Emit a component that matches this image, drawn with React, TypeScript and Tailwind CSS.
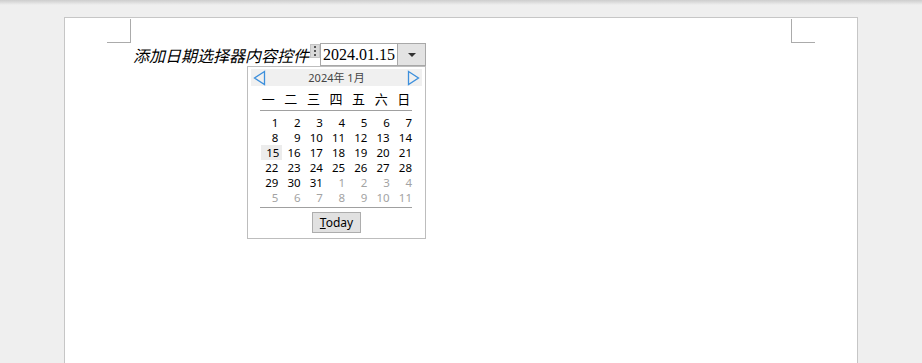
import React from "react";

const weekdays = ["一", "二", "三", "四", "五", "六", "日"];

const rows: { d: number; cur: boolean }[][] = [
  [1, 2, 3, 4, 5, 6, 7].map((d) => ({ d, cur: true })),
  [8, 9, 10, 11, 12, 13, 14].map((d) => ({ d, cur: true })),
  [15, 16, 17, 18, 19, 20, 21].map((d) => ({ d, cur: true })),
  [22, 23, 24, 25, 26, 27, 28].map((d) => ({ d, cur: true })),
  [
    { d: 29, cur: true },
    { d: 30, cur: true },
    { d: 31, cur: true },
    { d: 1, cur: false },
    { d: 2, cur: false },
    { d: 3, cur: false },
    { d: 4, cur: false },
  ],
  [5, 6, 7, 8, 9, 10, 11].map((d) => ({ d, cur: false })),
];

const Arrow = ({ dir }: { dir: "left" | "right" }) => (
  <svg width="13" height="16" viewBox="0 0 13 16">
    {dir === "left" ? (
      <path d="M11.5 1.5 L1.5 8 L11.5 14.5 Z" fill="none" stroke="#3c8fdc" strokeWidth="1.3" />
    ) : (
      <path d="M1.5 1.5 L11.5 8 L1.5 14.5 Z" fill="none" stroke="#3c8fdc" strokeWidth="1.3" />
    )}
  </svg>
);

const DatePopup = () => (
  <div className="absolute left-[247px] top-[66px] h-[173px] w-[179px] border border-[#bdbdbd] bg-white font-['Noto_Sans','Noto_Sans_CJK_SC',sans-serif]">
    <div className="mx-[3px] mt-[2px] flex h-[17px] items-center justify-between bg-[#f0f0f0] px-[2px]">
      <Arrow dir="left" />
      <span className="text-[11px] leading-none text-[#444]">2024年 1月</span>
      <Arrow dir="right" />
    </div>

    <div className="ml-[9px] mt-[5px] grid w-[158px] grid-cols-7 font-['Noto_Sans_CJK_SC',sans-serif] text-[13px] leading-[16px] text-black">
      {weekdays.map((w) => (
        <div key={w} className="text-center">
          {w}
        </div>
      ))}
    </div>

    <div className="ml-[12px] mt-[3px] h-px w-[152px] bg-[#a0a0a0]" />

    <div className="ml-[12px] mt-[4px] w-[156px] text-[11.5px] leading-[15px]">
      {rows.map((r, i) => (
        <div key={i} className="grid h-[15px] grid-cols-7">
          {r.map((c, j) => (
            <div
              key={j}
              className={
                (c.cur ? "text-black " : "text-[#a3a3a3] ") +
                (i === 2 && j === 0 ? "ml-px bg-[#ececec] pr-[3px] text-right" : "pr-[4px] text-right")
              }
            >
              {c.d}
            </div>
          ))}
        </div>
      ))}
    </div>

    <div className="ml-[12px] mt-[2px] h-px w-[152px] bg-[#a0a0a0]" />

    <div className="mt-[4px] flex justify-center">
      <button className="h-[21px] w-[49px] border border-[#adadad] bg-[#e1e1e1] text-[12px] leading-none text-black">
        <span className="underline">T</span>oday
      </button>
    </div>
  </div>
);

const App = () => {
  return (
    <div className="relative h-[363px] w-[922px] overflow-hidden bg-[#efefef]">
      <div className="h-[5px] bg-gradient-to-b from-[#cdcdcd] to-[#efefef]" />

      <div className="ml-[64px] mt-[12px] h-[400px] w-[794px] border border-[#c6c6c6] bg-white">
        <div className="mt-px flex justify-between pl-[42px] pr-[42px]">
          <div className="h-[24px] w-[24px] border-b border-r border-[#ababab]" />
          <div className="h-[24px] w-[24px] border-b border-l border-[#ababab]" />
        </div>

        <div className="flex items-start pl-[68px]">
          <span className="mt-[1px] font-['Noto_Sans_CJK_SC',sans-serif] text-[16px] italic leading-[22px] text-black">
            添加日期选择器内容控件
          </span>
          <div className="ml-[1px] flex h-[23px]">
            <div className="mt-[1px] flex h-[14px] w-[10px] flex-col items-center justify-center gap-[2px] border border-[#c4c4c4] bg-[#d9d9d9]">
              <span className="h-[2px] w-[2px] bg-[#555]" />
              <span className="h-[2px] w-[2px] bg-[#555]" />
              <span className="h-[2px] w-[2px] bg-[#555]" />
            </div>
            <div className="flex border border-[#a8a8a8]">
              <div className="w-[76px] pl-[2px] font-['Liberation_Serif',serif] text-[16px] leading-[21px] text-black">
                2024.01.15
              </div>
              <div className="flex w-[28px] items-center justify-center border-l border-[#a8a8a8] bg-[#e3e3e3]">
                <svg width="8" height="4" viewBox="0 0 8 4">
                  <path d="M0 0 L8 0 L4 4 Z" fill="#333" />
                </svg>
              </div>
            </div>
          </div>
        </div>
      </div>

      <DatePopup />
    </div>
  );
};

export default App;
